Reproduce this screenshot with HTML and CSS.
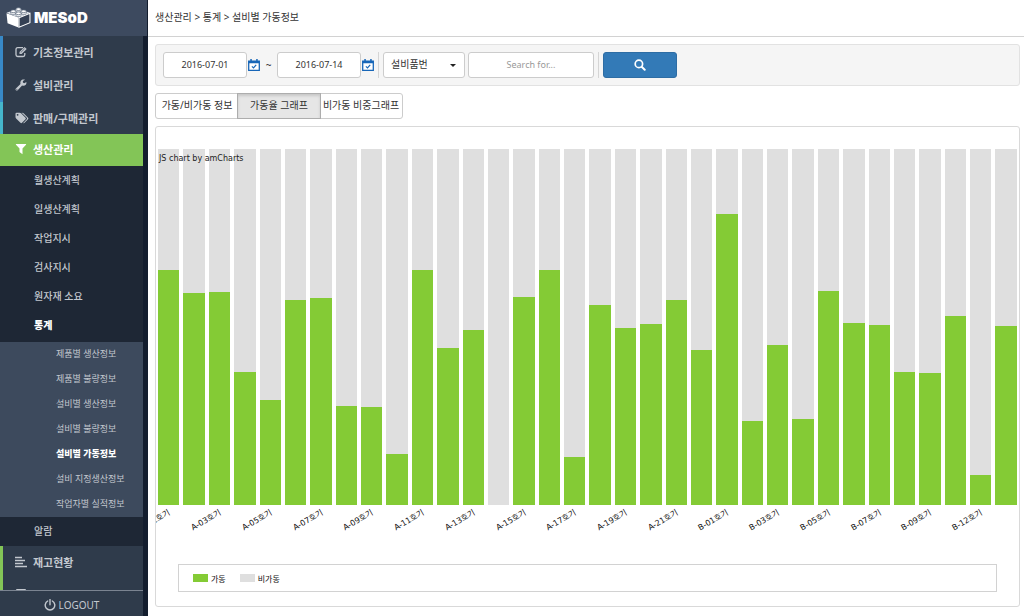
FILE: index.html
```html
<!DOCTYPE html>
<html lang="ko">
<head>
<meta charset="utf-8">
<meta name="viewport" content="width=device-width, initial-scale=1">
<title>설비별 가동정보</title>
<link rel="stylesheet" href="styles.css">
</head>
<body>
<div class="app">
  <aside class="sidebar">
    <a class="brand" href="#">
      <svg class="brand-mark" viewBox="0 0 24 20" aria-hidden="true">
        <path d="M.5 6 12 10v9.500L1.500 15.500z" fill="#fff"/>
        <path d="M.5 5.500 12 1.500l11 4-11 4.500z" fill="#dfe4ea"/>
        <path d="M12.500 10.200 23 6v9L12.500 19.300z" fill="#344054" stroke="#fff" stroke-width="1"/>
        <g fill="#fff" stroke="#59677a" stroke-width=".7">
          <path d="M9.500 2v2c0 1.300 5 1.300 5 0V2"/><ellipse cx="12" cy="2" rx="2.500" ry="1.300"/>
          <path d="M4.500 4v2c0 1.300 5 1.300 5 0V4"/><ellipse cx="7" cy="4" rx="2.500" ry="1.300"/>
          <path d="M14.500 4v2c0 1.300 5 1.300 5 0V4"/><ellipse cx="17" cy="4" rx="2.500" ry="1.300"/>
          <path d="M9.500 6v2c0 1.300 5 1.300 5 0V6"/><ellipse cx="12" cy="6" rx="2.500" ry="1.300"/>
        </g>
      </svg>
      <span class="brand-name">MESoD</span>
    </a>
    <nav class="menu" aria-label="주 메뉴">
      <a class="item blue" href="#">
        <svg class="icon" viewBox="0 0 12 12" aria-hidden="true"><path d="M8 1.700H2.700Q1 1.700 1 3.400v5.400q0 1.700 1.700 1.700h5.400q1.700 0 1.700-1.700V7" fill="none" stroke="currentColor" stroke-width="1.300"/><path d="m4.500 5.900 5-5L11.700 3 6.600 8.100H4.500z" fill="currentColor"/><path d="m5.700 6.600 3.800-3.800" stroke="#2f3b4b" stroke-width=".6"/></svg>
        기초정보관리</a>
      <a class="item blue" href="#">
        <svg class="icon" viewBox="0 0 12 12" aria-hidden="true"><path d="M11.400 2.900c.4 1.900-1 3.900-3 3.900-.5 0-.9-.1-1.300-.2L2.700 11.200c-.5.500-1.300.5-1.800 0s-.5-1.300 0-1.800l4.600-4.500C4.900 2.600 6.300.5 8.500.5c.6 0 1.100.1 1.500.3L7.900 2v1.500l1.300.8z" fill="currentColor"/><circle cx="1.900" cy="10.200" r=".5" fill="#2f3b4b"/></svg>
        설비관리</a>
      <a class="item cyan" href="#">
        <svg class="icon wide" viewBox="0 0 14 12" aria-hidden="true"><path d="M.5 1.700Q.5.700 1.500.700h3.200c.6 0 1 .2 1.400.6l4.400 4.400c.5.500.5 1 0 1.500L7 10.800c-.5.500-1 .5-1.500 0L1.100 6.400Q.5 5.800.5 5z" fill="currentColor"/><circle cx="2.600" cy="2.800" r=".9" fill="#2f3b4b"/><path d="M6.600.700h.6c.6 0 1 .2 1.400.6L13 5.700c.5.500.5 1 0 1.500l-3.500 3.600c-.5.500-.9.500-1.300.1l3.300-3.300c.7-.7.700-1.500 0-2.200z" fill="currentColor"/></svg>
        판매/구매관리</a>
      <a class="item active" href="#">
        <svg class="icon" viewBox="0 0 12 12" aria-hidden="true"><path d="M1.300 1h9.400c.5 0 .6.500.3.800L7.500 5.500v5.700L4.500 9V5.500L1 1.800c-.3-.3-.2-.8.300-.8z" fill="currentColor"/></svg>
        생산관리</a>
      <div class="submenu">
        <a href="#">월생산계획</a>
        <a href="#">일생산계획</a>
        <a href="#">작업지시</a>
        <a href="#">검사지시</a>
        <a href="#">원자재 소요</a>
        <a class="current" href="#">통계</a>
      </div>
      <div class="leafmenu">
        <a href="#">제품별 생산정보</a>
        <a href="#">제품별 불량정보</a>
        <a href="#">설비별 생산정보</a>
        <a href="#">설비별 불량정보</a>
        <a class="current" href="#">설비별 가동정보</a>
        <a href="#">설비 지정생산정보</a>
        <a href="#">작업자별 실적정보</a>
      </div>
      <div class="submenu single"><a href="#">알람</a></div>
      <a class="item green" href="#">
        <svg class="icon" viewBox="0 0 12 12" aria-hidden="true"><path d="M0 1.500h7M0 4.500h10M0 7.500h8M0 10.500h12" stroke="currentColor" stroke-width="1.700"/></svg>
        재고현황</a>
      <a class="item green" href="#">
        <svg class="icon" viewBox="0 0 12 12" aria-hidden="true"><rect x="1" y="0" width="10" height="11" rx="1" fill="currentColor"/></svg>
        인사관리</a>
    </nav>
    <a class="logout" href="#">
      <svg class="icon" viewBox="0 0 12 12" aria-hidden="true"><path d="M3.700 2A4.800 4.800 0 1 0 8.300 2M6 .5v5.300" fill="none" stroke="currentColor" stroke-width="1.400" stroke-linecap="round"/></svg>
      LOGOUT</a>
  </aside>

  <main class="main">
    <header class="crumbs">생산관리 &gt; 통계 &gt; 설비별 가동정보</header>
    <div class="content">
      <form class="filters">
        <input class="field date" type="text" value="2016-07-01" aria-label="시작일">
        <button class="calendar" type="button" aria-label="시작일 선택">
          <svg viewBox="0 0 12 12" aria-hidden="true"><path d="M.7 2.200h10.600v9.100H.7z" fill="#fff" stroke="#1766b8" stroke-width="1.300"/><path d="M.5 2h11v2.300H.5zM2.300 0h1.500v2H2.300zM8.200 0h1.500v2H8.200z" fill="#1766b8"/><path d="m3.900 7.400 1.600 1.500 2.700-3" fill="none" stroke="#1766b8" stroke-width="1.200"/></svg>
        </button>
        <span class="tilde">~</span>
        <input class="field date" type="text" value="2016-07-14" aria-label="종료일">
        <button class="calendar" type="button" aria-label="종료일 선택">
          <svg viewBox="0 0 12 12" aria-hidden="true"><path d="M.7 2.200h10.600v9.100H.7z" fill="#fff" stroke="#1766b8" stroke-width="1.300"/><path d="M.5 2h11v2.300H.5zM2.300 0h1.500v2H2.300zM8.200 0h1.500v2H8.200z" fill="#1766b8"/><path d="m3.900 7.400 1.600 1.500 2.700-3" fill="none" stroke="#1766b8" stroke-width="1.200"/></svg>
        </button>
        <span class="divider"></span>
        <span class="picker">
          <select class="field" aria-label="검색 조건"><option>설비품번</option></select>
          <svg class="caret" viewBox="0 0 6 3" aria-hidden="true"><path d="M0 0h6L3 3z" fill="#222"/></svg>
        </span>
        <input class="field search" type="text" placeholder="Search for..." aria-label="검색어">
        <span class="divider"></span>
        <button class="submit" type="submit" aria-label="검색">
          <svg viewBox="0 0 12 12" aria-hidden="true"><circle cx="4.900" cy="4.900" r="3.700" fill="none" stroke="#fff" stroke-width="1.700"/><path d="m7.700 7.700 3 3" stroke="#fff" stroke-width="2" stroke-linecap="round"/></svg>
        </button>
      </form>

      <div class="tabs">
        <button type="button">가동/비가동 정보</button>
        <button class="selected" type="button">가동율 그래프</button>
        <button type="button">비가동 비중그래프</button>
      </div>

      <section class="card" aria-label="가동율 그래프">
        <div class="chart" id="chart"><span class="credit">JS chart by amCharts</span></div>
        <div class="legend">
          <span class="key"><i class="swatch on"></i>가동</span>
          <span class="key"><i class="swatch"></i>비가동</span>
        </div>
      </section>
    </div>
  </main>
</div>
<script src="chart.js"></script>
</body>
</html>
```
FILE: styles.css
```css
* { box-sizing: border-box; }

body {
  margin: 0;
  background: #fff;
  color: #333;
  font-family: "Noto Sans", "Noto Sans CJK KR", sans-serif;
  font-size: 10px;
}

a { color: inherit; text-decoration: none; }
button, input, select { font: inherit; color: inherit; margin: 0; padding: 0; }
svg { display: block; flex: none; }

.app { display: flex; height: 100vh; }

/* Sidebar */
.sidebar {
  display: flex;
  flex: none;
  flex-direction: column;
  width: 148px;
  border-right: 5px solid #131d2e;
  background: #2f3b4b;
  color: #c3c8cf;
}
.brand {
  display: flex;
  flex: none;
  align-items: center;
  gap: 3px;
  height: 36px;
  margin-right: -4px;
  padding: 0 0 2px 6px;
  background: #3d4a5f;
}
.brand-mark { width: 25px; height: 21px; }
.brand-name {
  color: #fff;
  font-family: Inter, sans-serif;
  font-size: 15px;
  font-weight: 900;
}
.menu { flex: 1; min-height: 0; overflow: hidden; }
.item {
  display: flex;
  align-items: center;
  gap: 6px;
  height: 33px;
  padding: 0 0 2px 12px;
  border-left: 3px solid transparent;
  font-size: 11px;
  font-weight: 700;
}
.icon { width: 12px; height: 12px; }
.icon.wide { width: 14px; margin-right: -2px; }
.blue { border-color: #3889c7; }
.cyan { border-color: #45b5cb; }
.green { border-color: #83c557; }
.active { height: 32px; margin-top: -1px; border-color: #83c557; background: #83c557; color: #fff; }
.submenu { padding-bottom: 2px; background: #1e2735; font-size: 10px; font-weight: 500; }
.submenu a { display: block; padding-left: 34px; line-height: 29px; }
.submenu.single { padding: 0; }
.leafmenu { background: #3d4a5d; font-size: 9px; }
.leafmenu a { display: block; padding: 0 0 1px 56px; line-height: 24px; }
.current { color: #fff; font-weight: 900; }
.logout {
  display: flex;
  flex: none;
  align-items: center;
  justify-content: center;
  gap: 3px;
  height: 26px;
  padding-top: 2px;
  border-top: 1px solid #7b8491;
  font-size: 10px;
}

/* Page */
.main { display: flex; flex: 1; flex-direction: column; min-width: 0; }
.crumbs { flex: none; height: 37px; padding-left: 7px; border-bottom: 1px solid #d2d2d2; line-height: 34px; }
.content {
  display: flex;
  flex: 1;
  flex-direction: column;
  gap: 7px;
  min-height: 0;
  padding: 7px 4px 9px 7px;
}

/* Filters */
.filters {
  display: flex;
  align-items: center;
  flex: none;
  height: 42px;
  padding: 0 7px 1px;
  border: 1px solid #e2e2e2;
  border-radius: 3px;
  background: #f5f5f5;
}
.field {
  height: 26px;
  padding-bottom: 1px;
  border: 1px solid #ccc;
  border-radius: 3px;
  background: #fff;
}
.date { width: 84px; font-size: 9px; text-align: center; }
.calendar { width: 12px; margin-left: 1px; border: 0; background: none; }
.calendar svg { width: 12px; height: 12px; }
.tilde { width: 17px; text-align: center; }
.divider { width: 1px; height: 26px; margin: 0 4px; background: #d5d5d5; }
.picker { position: relative; margin-right: 3px; }
.picker .field { display: block; width: 82px; padding-left: 7px; appearance: none; }
.caret { position: absolute; top: 12px; right: 9px; width: 6px; height: 3px; }
.search { width: 126px; font-size: 9px; text-align: center; }
.search::placeholder { color: #999; }
.submit {
  display: grid;
  place-items: center;
  width: 74px;
  height: 26px;
  border: 1px solid #2e6da4;
  border-radius: 3px;
  background: #337ab7;
}
.submit svg { width: 12px; height: 12px; }

/* Tabs */
.tabs {
  display: grid;
  grid-template-columns: repeat(3, 82px);
  flex: none;
  align-self: flex-start;
  height: 26px;
  border: 1px solid #ccc;
  border-radius: 3px;
}
.tabs button { padding-bottom: 3px; border: 0; background: none; white-space: nowrap; }
.tabs .selected {
  background: #e6e6e6;
  box-shadow: 0 0 0 1px #adadad, inset 0 2px 3px #0002;
}

/* Chart */
.card {
  display: flex;
  flex: 1;
  flex-direction: column;
  min-height: 0;
  border: 1px solid #d9d9d9;
  border-radius: 3px;
  overflow: hidden;
}
.chart {
  position: relative;
  display: flex;
  flex: 1;
  gap: 4px;
  min-height: 0;
  padding: 22px 2px 0;
}
.credit {
  position: absolute;
  top: 26px;
  left: 3px;
  color: #222;
  font-family: "DejaVu Sans", sans-serif;
  font-size: 8px;
  line-height: 12px;
}
.column { display: flex; flex: 1; flex-direction: column; min-width: 0; }
.track { display: flex; flex: 1; align-items: flex-end; background: #dfdfdf; }
.bar { width: 100%; background: #84cb35; }
.tick {
  display: flex;
  justify-content: flex-end;
  height: 59px;
  padding: 3px 12px 0 0;
  color: #111;
  font-family: "DejaVu Sans", "Noto Sans CJK KR", sans-serif;
  font-size: 8px;
  line-height: 10px;
}
.tick span {
  flex: none;
  height: 10px;
  white-space: nowrap;
  transform: rotate(-30deg);
  transform-origin: top right;
}
.legend {
  display: flex;
  flex: none;
  align-items: center;
  gap: 14px;
  height: 28px;
  margin: 0 22px 14px;
  padding-left: 14px;
  border: 1px solid #d2d2d2;
  color: #111;
  font-size: 8px;
}
.key { display: flex; align-items: center; gap: 3px; }
.swatch { width: 15px; height: 8px; background: #dfdfdf; }
.swatch.on { background: #84cb35; }
```
FILE: chart.js
```js
// Operating rate of each machine, in percent.
const rates = [
  66, 59.5, 59.8, 37.3, 29.4, 57.5, 58.2, 27.8, 27.5, 14.2, 66, 44.2,
  49.1, 0, 58.5, 66, 13.4, 56.2, 49.7, 50.9, 57.6, 43.6, 81.8, 23.5,
  45, 24.1, 60, 51.1, 50.6, 37.5, 37.1, 53, 8.3, 50.3
];

// The axis names every second machine.
const names = [
  "A-01", "A-03", "A-05", "A-07", "A-09", "A-11", "A-13", "A-15", "A-17",
  "A-19", "A-21", "B-01", "B-03", "B-05", "B-07", "B-09", "B-12"
];

document.getElementById("chart").insertAdjacentHTML(
  "afterbegin",
  rates.map((rate, i) => `
    <div class="column">
      <div class="track"><div class="bar" style="height:${rate}%"></div></div>
      <div class="tick">${i % 2 ? "" : `<span>${names[i / 2]}호기</span>`}</div>
    </div>`).join("")
);
```
